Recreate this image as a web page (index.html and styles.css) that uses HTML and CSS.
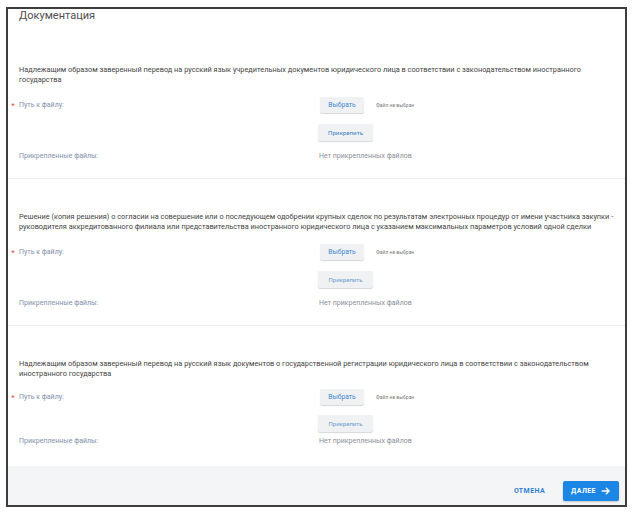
FILE: index.html
```html
<!DOCTYPE html>
<html lang="ru">
<head>
<meta charset="utf-8">
<title>Документация</title>
<link rel="stylesheet" href="styles.css">
</head>
<body>
<div class="page">
  <div class="modal">
    <div class="modal__header">Документация</div>
    <div class="modal__body">
      <section class="doc">
        <p class="doc__desc">Надлежащим образом заверенный перевод на русский язык учредительных документов юридического лица в соответствии с законодательством иностранного государства</p>
        <div class="doc__grid">
          <div class="field__label field__label--req">Путь к файлу:</div>
          <div class="field__value">
            <button class="btn">Выбрать</button>
            <span class="doc__nofile">Файл не выбран</span>
          </div>
          <div class="field__label"></div>
          <div class="field__value field__value--attach"><button class="btn btn--attach">Прикрепить</button></div>
          <div class="field__label">Прикрепленные файлы:</div>
          <div class="field__value field__value--files">Нет прикрепленных файлов</div>
        </div>
      </section>
      <section class="doc">
        <p class="doc__desc">Решение (копия решения) о согласии на совершение или о последующем одобрении крупных сделок по результатам электронных процедур от имени участника закупки - руководителя аккредитованного филиала или представительства иностранного юридического лица с указанием максимальных параметров условий одной сделки</p>
        <div class="doc__grid">
          <div class="field__label field__label--req">Путь к файлу:</div>
          <div class="field__value">
            <button class="btn">Выбрать</button>
            <span class="doc__nofile">Файл не выбран</span>
          </div>
          <div class="field__label"></div>
          <div class="field__value field__value--attach"><button class="btn btn--attach btn--muted">Прикрепить</button></div>
          <div class="field__label">Прикрепленные файлы:</div>
          <div class="field__value field__value--files">Нет прикрепленных файлов</div>
        </div>
      </section>
      <section class="doc doc--last">
        <p class="doc__desc">Надлежащим образом заверенный перевод на русский язык документов о государственной регистрации юридического лица в соответствии с законодательством иностранного государства</p>
        <div class="doc__grid">
          <div class="field__label field__label--req">Путь к файлу:</div>
          <div class="field__value">
            <button class="btn">Выбрать</button>
            <span class="doc__nofile">Файл не выбран</span>
          </div>
          <div class="field__label"></div>
          <div class="field__value field__value--attach"><button class="btn btn--attach btn--muted">Прикрепить</button></div>
          <div class="field__label">Прикрепленные файлы:</div>
          <div class="field__value field__value--files">Нет прикрепленных файлов</div>
        </div>
      </section>
    </div>
    <div class="modal__footer">
      <button class="btn-text">Отмена</button>
      <button class="btn-primary">Далее
        <svg class="btn-primary__icon" viewBox="0 0 16 16" width="10" height="10" aria-hidden="true">
          <path d="M2 8h11M8.5 3.5L13 8l-4.5 4.5" fill="none" stroke="#fff" stroke-width="2.2" stroke-linecap="round" stroke-linejoin="round"/>
        </svg>
      </button>
    </div>
  </div>
</div>
</body>
</html>
```

FILE: styles.css
```css
* { box-sizing: border-box; }

html, body {
  margin: 0;
  padding: 0;
  background: #ffffff;
  font-family: Roboto, "Noto Sans", "Liberation Sans", sans-serif;
}

.page {
  padding: 7px 0 0 6px;
}

.modal {
  width: 621px;
  height: 500px;
  border: 2px solid #3d3d3d;
  background: #ffffff;
  display: flex;
  flex-direction: column;
  overflow: hidden;
}

.modal__header {
  height: 23px;
  padding-left: 11px;
  font-size: 11px;
  line-height: 13px;
  color: #4f4f4f;
}

.modal__body {
  display: flex;
  flex-direction: column;
}

.doc {
  --gap-desc: 12px;
  --gap-attach: 11px;
  --gap-files: 10px;
  padding: 33px 4px 17px 11px;
  border-bottom: 1px solid #ededed;
}

.doc--last {
  --gap-desc: 10px;
  --gap-attach: 10px;
  --gap-files: 4px;
  padding-bottom: 20px;
  border-bottom: none;
}

.doc__desc {
  margin: 0;
  font-size: 7.35px;
  line-height: 10px;
  height: 20px;
  color: #444444;
}

.doc__grid {
  display: grid;
  grid-template-columns: 301px 1fr;
  grid-template-rows: 16px calc(17px + var(--gap-attach)) calc(10px + var(--gap-files));
  margin-top: var(--gap-desc);
}

.doc__grid > :nth-child(3),
.doc__grid > :nth-child(4) {
  margin-top: var(--gap-attach);
}

.doc__grid > :nth-child(5),
.doc__grid > :nth-child(6) {
  margin-top: var(--gap-files);
}

.field__label {
  font-size: 7px;
  line-height: 10px;
  color: #8490aa;
  display: flex;
  align-items: center;
}

.field__label--req::before {
  content: "*";
  color: #e0464b;
  font-size: 8px;
  width: 8px;
  margin-left: -10px;
  margin-right: 2px;
  text-align: center;
  line-height: 10px;
  padding-top: 2px;
}

.field__value {
  display: flex;
  align-items: center;
  font-size: 7px;
  line-height: 10px;
}

.field__value--attach {
  margin-left: -2px;
}

.field__value--files {
  color: #8b8f98;
  margin-left: -1px;
}

.btn {
  height: 16px;
  width: 44px;
  padding: 0;
  border: none;
  border-radius: 2px;
  background: #f0f1f3;
  box-shadow: 0 1px 1px rgba(0, 0, 0, 0.16);
  color: #4189d2;
  font-family: inherit;
  font-size: 6.8px;
  cursor: pointer;
}

.btn--attach {
  height: 17px;
  width: 55px;
  color: #3a7fc4;
  font-size: 6.2px;
}

.btn--muted {
  color: #6c9dd2;
  font-size: 6px;
}

.doc__nofile {
  margin-left: 12px;
  font-size: 5px;
  color: #7a7a7a;
}

.modal__footer {
  flex: 1;
  background: #f4f5f7;
  display: flex;
  justify-content: flex-end;
  align-items: flex-start;
  padding: 15px 6px 0 0;
  gap: 18px;
}

.btn-text {
  height: 20px;
  padding: 0;
  border: none;
  background: transparent;
  color: #2f7fcf;
  font-family: inherit;
  font-size: 7px;
  font-weight: 700;
  letter-spacing: 0.4px;
  text-transform: uppercase;
  cursor: pointer;
}

.btn-primary {
  height: 20px;
  width: 56px;
  padding: 0;
  border: none;
  border-radius: 2px;
  background: #1c86e4;
  color: #ffffff;
  font-family: inherit;
  font-size: 7px;
  font-weight: 700;
  letter-spacing: 0.4px;
  text-transform: uppercase;
  display: flex;
  align-items: center;
  justify-content: center;
  gap: 5px;
  box-shadow: 0 1px 2px rgba(0, 0, 0, 0.2);
  cursor: pointer;
}

.btn-primary__icon {
  display: block;
}
```
